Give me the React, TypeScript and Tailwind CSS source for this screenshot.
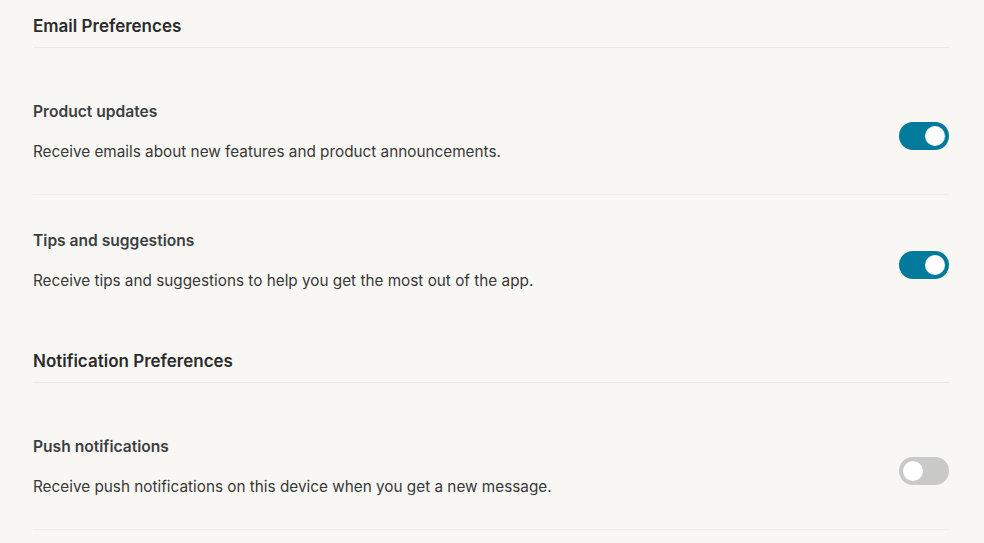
import { useState } from "react";

type Pref = { id: string; label: string; description: string; enabled: boolean };

const SECTIONS: { title: string; items: Pref[]; lastDivider: boolean }[] = [
  {
    title: "Email Preferences",
    lastDivider: false,
    items: [
      {
        id: "product",
        label: "Product updates",
        description: "Receive emails about new features and product announcements.",
        enabled: true,
      },
      {
        id: "tips",
        label: "Tips and suggestions",
        description: "Receive tips and suggestions to help you get the most out of the app.",
        enabled: true,
      },
    ],
  },
  {
    title: "Notification Preferences",
    lastDivider: true,
    items: [
      {
        id: "push",
        label: "Push notifications",
        description: "Receive push notifications on this device when you get a new message.",
        enabled: false,
      },
    ],
  },
];

function Toggle({ on, onChange }: { on: boolean; onChange: () => void }) {
  return (
    <button
      type="button"
      role="switch"
      aria-checked={on}
      onClick={onChange}
      className={`mt-[20px] flex h-[28px] w-[50px] shrink-0 items-center rounded-full px-[4px] transition-colors ${
        on ? "justify-end bg-[#017a9c]" : "justify-start bg-[#c9c9c7]"
      }`}
    >
      <span className="h-[20px] w-[20px] rounded-full bg-white" />
    </button>
  );
}

export default function App() {
  const [prefs, setPrefs] = useState<Record<string, boolean>>(() =>
    Object.fromEntries(SECTIONS.flatMap((s) => s.items.map((i) => [i.id, i.enabled])))
  );

  return (
    <div
      className="min-h-[543px] bg-[#f8f7f4] pl-[33px] pr-[35px]"
      style={{ fontFamily: "Inter, 'Noto Sans', sans-serif" }}
    >
      {SECTIONS.map((section, si) => (
        <section key={section.title} className={si === 0 ? "" : "mt-[12px]"}>
          {/* Section header */}
          <h2 className="border-b border-[#e9e8e3] pt-[14px] pb-[9px] text-[17px] leading-[24px] font-semibold text-[#2b2b2b]">
            {section.title}
          </h2>

          <div className="pt-[18px]">
            {section.items.map((item, i) => {
              const last = i === section.items.length - 1;
              return (
                <div
                  key={item.id}
                  className={`flex items-start justify-between pt-[36px] pb-[32px] ${
                    !last || section.lastDivider ? "border-b border-[#efeee9]" : ""
                  }`}
                >
                  <div>
                    <p className="text-[15.6px] leading-[20px] font-semibold text-[#3b3f43]">{item.label}</p>
                    <p className="mt-[20px] text-[15.3px] leading-[20px] text-[#383838]">{item.description}</p>
                  </div>
                  <Toggle
                    on={prefs[item.id]}
                    onChange={() => setPrefs((p) => ({ ...p, [item.id]: !p[item.id] }))}
                  />
                </div>
              );
            })}
          </div>
        </section>
      ))}
    </div>
  );
}
